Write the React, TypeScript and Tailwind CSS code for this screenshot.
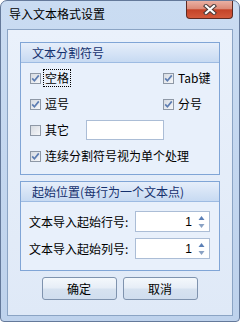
import React from "react";

function Check({ checked }: { checked: boolean }) {
  return (
    <span className="w-[11px] h-[11px] shrink-0 border border-[#8e98a6] bg-[linear-gradient(135deg,#d6dbe2,#f6f7f9)] flex items-center justify-center">
      {checked && (
        <svg width="9" height="9" viewBox="0 0 9 9">
          <path d="M1.2 4.4 L3.4 6.8 L7.8 1.4" stroke="#5d7db2" strokeWidth="1.7" fill="none" />
        </svg>
      )}
    </span>
  );
}

function Group({ title, children }: { title: string; children: React.ReactNode }) {
  return (
    <div className="border border-[#80a5d6] bg-[#e8f0fb]">
      <div className="h-[20px] border-b border-[#9dbbe2] bg-[linear-gradient(to_bottom,#e6eefa,#c7daf2)] pl-[11px] flex items-center text-[#14306d] leading-none">
        {title}
      </div>
      {children}
    </div>
  );
}

function Spin({ value }: { value: string }) {
  return (
    <div className="w-[75px] h-[21px] border border-[#abbdd6] bg-white flex items-center justify-end">
      <span className="font-['Liberation_Sans',sans-serif] text-[12px] leading-none text-black">{value}</span>
      <svg width="7" height="14" viewBox="0 0 7 14" className="ml-[6px] mr-[4px]">
        <path d="M3.5 1 L6.5 5 L0.5 5 Z" fill="#5b7fb6" />
        <path d="M0.5 9 L6.5 9 L3.5 13 Z" fill="#8aa2c4" />
      </svg>
    </div>
  );
}

function Btn({ label }: { label: string }) {
  return (
    <div className="w-[75px] h-[23px] rounded-[3px] border border-[#7f93ae] bg-[linear-gradient(to_bottom,#f4f8fc_0%,#e7eef7_45%,#d6e2f0_55%,#d0ddee_100%)] flex items-center justify-center text-black leading-none">
      {label}
    </div>
  );
}

export default function App() {
  return (
    <div className="w-[240px] h-[322px] flex flex-col rounded-t-[7px] rounded-b-[4px] border border-[#64799a] bg-[linear-gradient(to_bottom,#cadcf2,#bed2ec)] font-['Noto_Sans_CJK_SC','Noto_Sans',sans-serif] text-[12px] text-black">
      <div className="h-[28px] flex items-start shrink-0">
        <div className="pl-[8px] pt-[5px] leading-[16px] text-[12px] text-black">导入文本格式设置</div>
        <div className="ml-auto mr-[6px] w-[47px] h-[18px] rounded-b-[4px] border border-t-0 border-[#5e2a22] bg-[linear-gradient(to_bottom,#eab0a3_0%,#dc8b78_45%,#c44328_52%,#d35a3c_100%)] flex items-center justify-center">
          <svg width="14" height="11" viewBox="0 0 14 11">
            <path d="M3 2 L11 9 M11 2 L3 9" stroke="#4a3b3a" strokeWidth="4.2" strokeLinecap="square" />
            <path d="M3 2 L11 9 M11 2 L3 9" stroke="#ffffff" strokeWidth="2.2" strokeLinecap="square" />
          </svg>
        </div>
      </div>
      <div className="mx-[6px] h-[287px] border border-[#8ba4c4] bg-[linear-gradient(to_bottom,#eaf1fb,#dfe9f7)] px-[12px] pt-[12px] flex flex-col">
        <Group title="文本分割符号">
          <div className="pt-[2px] pb-[5px] pl-[9px] flex flex-col">
            <div className="h-[26px] flex items-center">
              <div className="w-[133px] flex items-center">
                <Check checked />
                <span className="ml-[2px] border border-dotted border-black px-[1px] py-[2px] leading-[12px]">空格</span>
              </div>
              <Check checked />
              <span className="ml-[4px] leading-none">Tab键</span>
            </div>
            <div className="h-[26px] flex items-center">
              <div className="w-[133px] flex items-center">
                <Check checked />
                <span className="ml-[4px] leading-none">逗号</span>
              </div>
              <Check checked />
              <span className="ml-[4px] leading-none">分号</span>
            </div>
            <div className="h-[26px] flex items-center">
              <Check checked={false} />
              <span className="ml-[4px] leading-none">其它</span>
              <div className="ml-[17px] w-[78px] h-[20px] border border-[#abbdd6] bg-white" />
            </div>
            <div className="h-[26px] flex items-center">
              <Check checked />
              <span className="ml-[4px] leading-none">连续分割符号视为单个处理</span>
            </div>
          </div>
        </Group>
        <div className="mt-[6px]">
          <Group title="起始位置(每行为一个文本点)">
            <div className="pt-[9px] pb-[11px] pl-[8px] flex flex-col gap-[6px]">
              <div className="flex items-center">
                <span className="w-[106px] leading-none">文本导入起始行号:</span>
                <Spin value="1" />
              </div>
              <div className="flex items-center">
                <span className="w-[106px] leading-none">文本导入起始列号:</span>
                <Spin value="1" />
              </div>
            </div>
          </Group>
        </div>
        <div className="mt-[6px] flex justify-center gap-[6px] -ml-[1px]">
          <Btn label="确定" />
          <Btn label="取消" />
        </div>
      </div>
    </div>
  );
}
